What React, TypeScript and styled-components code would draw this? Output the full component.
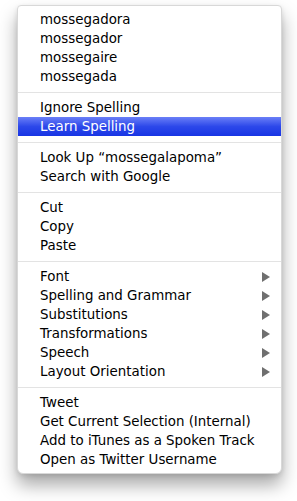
import styled, { createGlobalStyle } from "styled-components";

const GlobalStyle = createGlobalStyle`
  html, body {
    margin: 0;
    padding: 0;
    background: #ffffff;
  }
  body {
    font-family: "DejaVu Sans", "Liberation Sans", sans-serif;
  }
`;

const Page = styled.div`
  width: 297px;
  height: 501px;
  padding: 5px 0 0 17px;
  box-sizing: border-box;
  overflow: hidden;
`;

const Menu = styled.div`
  width: 265px;
  box-sizing: border-box;
  background: #ffffff;
  border: 1px solid #d8d8d8;
  border-radius: 4px 4px 6px 6px;
  padding: 4px 0;
  box-shadow: 0 11px 18px rgba(0, 0, 0, 0.34), 0 2px 5px rgba(0, 0, 0, 0.1);
`;

const Item = styled.div<{ $active?: boolean }>`
  height: 19px;
  display: flex;
  align-items: center;
  justify-content: space-between;
  padding: 0 11px 0 22px;
  font-size: 13.4px;
  color: ${(p) => (p.$active ? "#ffffff" : "#000000")};
  background: ${(p) =>
    p.$active ? "linear-gradient(#6a7ff7, #2c48ea 50%, #1835e4)" : "transparent"};
  white-space: nowrap;
`;

const Separator = styled.div`
  height: 12px;
  display: flex;
  align-items: center;
  &::after {
    content: "";
    flex: 1;
    height: 1px;
    background: #e3e3e3;
  }
`;

const Arrow = styled.span`
  width: 0;
  height: 0;
  border-top: 5px solid transparent;
  border-bottom: 5px solid transparent;
  border-left: 8px solid #6f6f6f;
`;

type Entry = { label: string; submenu?: boolean; active?: boolean };

const groups: Entry[][] = [
  [
    { label: "mossegadora" },
    { label: "mossegador" },
    { label: "mossegaire" },
    { label: "mossegada" },
  ],
  [{ label: "Ignore Spelling" }, { label: "Learn Spelling", active: true }],
  [{ label: "Look Up \u201Cmossegalapoma\u201D" }, { label: "Search with Google" }],
  [{ label: "Cut" }, { label: "Copy" }, { label: "Paste" }],
  [
    { label: "Font", submenu: true },
    { label: "Spelling and Grammar", submenu: true },
    { label: "Substitutions", submenu: true },
    { label: "Transformations", submenu: true },
    { label: "Speech", submenu: true },
    { label: "Layout Orientation", submenu: true },
  ],
  [
    { label: "Tweet" },
    { label: "Get Current Selection (Internal)" },
    { label: "Add to iTunes as a Spoken Track" },
    { label: "Open as Twitter Username" },
  ],
];

export default function App() {
  return (
    <Page>
      <GlobalStyle />
      <Menu>
        {groups.map((group, gi) => (
          <div key={gi}>
            {gi > 0 && <Separator />}
            {group.map((entry) => (
              <Item key={entry.label} $active={entry.active}>
                <span>{entry.label}</span>
                {entry.submenu && <Arrow />}
              </Item>
            ))}
          </div>
        ))}
      </Menu>
    </Page>
  );
}
